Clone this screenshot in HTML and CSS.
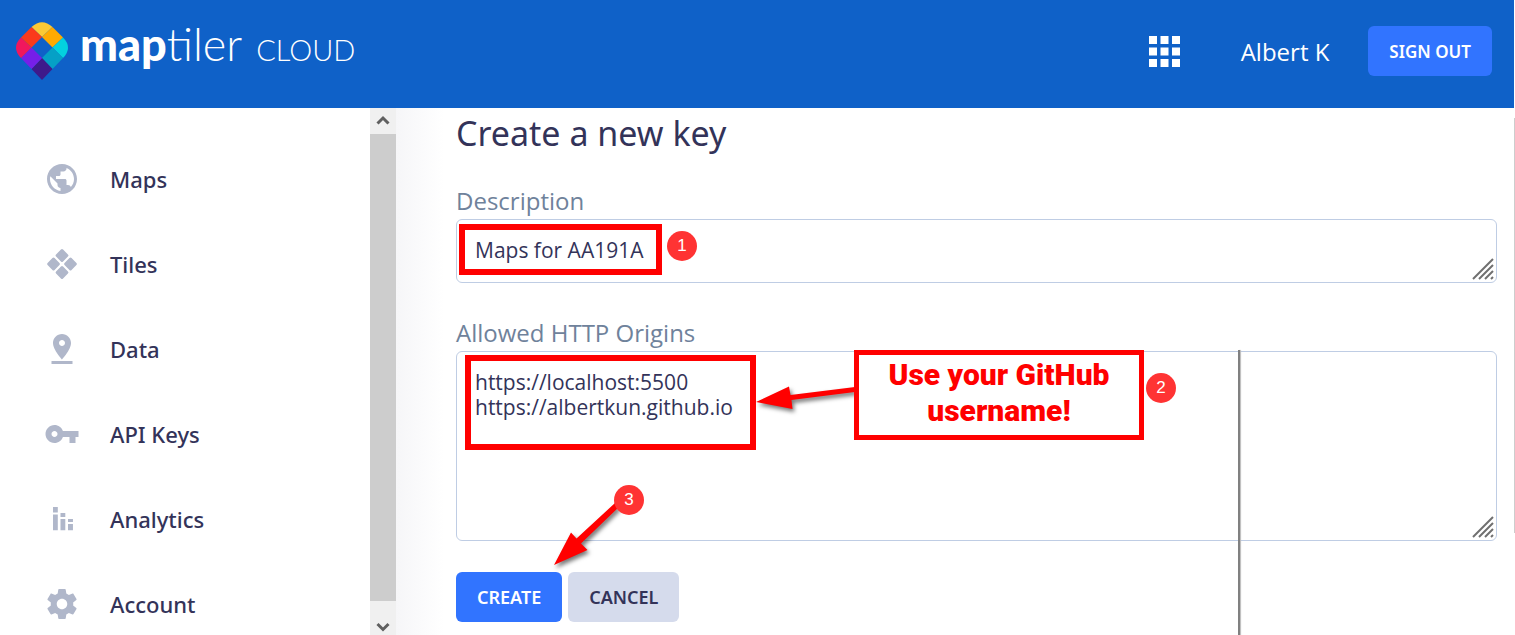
FILE: index.html
```html
<!DOCTYPE html>
<html lang="en">
<head>
<meta charset="utf-8">
<title>MapTiler Cloud - Create a new key</title>
<link rel="stylesheet" href="styles.css">
</head>
<body>
<div class="app">
  <header class="topbar">
    <a class="brand" href="#">
      <svg class="brand-mark" viewBox="0 0 52 58" aria-hidden="true">
        <path fill="#fbc935" d="M15.500 5Q26-4.500 36.500 5L26 15z"/>
        <path fill="#ffaa01" d="M36.500 5L47 15.500 36.500 25.500 26 15z"/>
        <path fill="#03d1df" d="M47 15.500Q57 25.500 47 36L36.500 25.500z"/>
        <path fill="#05a0c6" d="M36.500 25.500L47 36 36.500 47 26 36z"/>
        <path fill="#3e1a8b" d="M26 36L36.500 47 26 58 15.500 47z"/>
        <path fill="#761fe8" d="M15.500 25.500L26 36 15.500 47 5 36z"/>
        <path fill="#f1175d" d="M5 15.500L15.500 25.500 5 36Q-5 25.500 5 15.500z"/>
        <path fill="#fb3a1b" d="M15.500 5L26 15 15.500 25.500 5 15.500z"/>
      </svg>
      <span class="brand-text">
        <span class="brand-name"><b>map</b>tiler</span>
        <span class="brand-product">CLOUD</span>
      </span>
    </a>
    <div class="account-bar">
      <button class="apps" type="button" aria-label="Apps">
        <svg viewBox="0 0 31 31" fill="#fff" aria-hidden="true"><path d="M0 0h8v8H0zM11.500 0h8v8h-8zM23 0h8v8h-8zM0 11.500h8v8H0zM11.500 11.500h8v8h-8zM23 11.500h8v8h-8zM0 23h8v8H0zM11.500 23h8v8h-8zM23 23h8v8h-8z"/></svg>
      </button>
      <a class="user" href="#">Albert K</a>
      <button class="btn btn-primary btn-compact" type="button">SIGN OUT</button>
    </div>
  </header>

  <div class="body">
    <nav class="sidebar">
      <a class="nav-item" href="#">
        <svg viewBox="0 0 24 24"><path d="M12 2C6.480 2 2 6.480 2 12s4.480 10 10 10 10-4.480 10-10S17.520 2 12 2zm-1 17.930c-3.950-.49-7-3.850-7-7.930 0-.62.080-1.210.210-1.790L9 15v1c0 1.100.9 2 2 2v1.930zm6.900-2.540c-.26-.81-1-1.390-1.900-1.390h-1v-3c0-.55-.45-1-1-1H8v-2h2c.55 0 1-.45 1-1V7h2c1.100 0 2-.9 2-2v-.41c2.930 1.190 5 4.060 5 7.410 0 2.080-.8 3.970-2.100 5.390z"/></svg>
        Maps</a>
      <a class="nav-item" href="#">
        <svg viewBox="0 0 24 24"><g transform="rotate(45 12 12)"><rect x="4.700" y="4.700" width="6.600" height="6.600" rx="1"/><rect x="12.700" y="4.700" width="6.600" height="6.600" rx="1"/><rect x="4.700" y="12.700" width="6.600" height="6.600" rx="1"/><rect x="12.700" y="12.700" width="6.600" height="6.600" rx="1"/></g></svg>
        Tiles</a>
      <a class="nav-item" href="#">
        <svg viewBox="0 0 24 24"><path d="M18 8c0-3.310-2.690-6-6-6S6 4.690 6 8c0 4.500 6 11 6 11s6-6.500 6-11zm-8 0c0-1.100.9-2 2-2s2 .9 2 2-.89 2-2 2c-1.100 0-2-.9-2-2zM5 20v2h14v-2H5z"/></svg>
        Data</a>
      <a class="nav-item" href="#">
        <svg viewBox="0 0 24 24"><path fill-rule="evenodd" d="M12.600 10C11.800 7.700 9.600 6 7 6c-3.300 0-6 2.700-6 6s2.700 6 6 6c2.600 0 4.800-1.700 5.600-4H17v4h4v-4h2v-4H12.600zM7 14c-1.100 0-2-.9-2-2s.9-2 2-2 2 .9 2 2-.9 2-2 2z"/></svg>
        API Keys</a>
      <a class="nav-item" href="#">
        <svg viewBox="0 0 24 24"><path d="M6 4h3.200v3.700H6zM6 9h3.200v10.500H6zM11 8h3.200v2.700H11zM11 12h3.200v7.500H11zM16 12h3.300v2H16zM16 15.300h3.300v4.200H16z"/></svg>
        Analytics</a>
      <a class="nav-item" href="#">
        <svg viewBox="0 0 24 24"><path d="M19.430 12.980c.04-.32.070-.64.070-.98s-.03-.66-.07-.98l2.110-1.650c.19-.15.240-.42.120-.64l-2-3.460c-.12-.22-.39-.3-.61-.22l-2.490 1c-.52-.4-1.080-.73-1.690-.98l-.38-2.650C14.460 2.180 14.250 2 14 2h-4c-.25 0-.46.180-.49.420l-.38 2.650c-.61.250-1.170.590-1.690.98l-2.490-1c-.23-.09-.49 0-.61.220l-2 3.460c-.13.220-.07.490.120.640l2.110 1.650c-.04.320-.07.650-.07.980s.03.660.070.980l-2.110 1.650c-.19.150-.24.420-.12.640l2 3.460c.12.220.39.300.61.220l2.490-1c.52.400 1.080.730 1.690.98l.38 2.650c.03.240.240.420.49.420h4c.25 0 .46-.18.49-.42l.38-2.650c.61-.25 1.170-.59 1.690-.98l2.490 1c.23.090.49 0 .61-.22l2-3.460c.12-.22.070-.49-.12-.64l-2.110-1.650zM12 15.500c-1.930 0-3.500-1.570-3.500-3.500s1.570-3.500 3.500-3.500 3.500 1.570 3.500 3.500-1.570 3.500-3.500 3.500z"/></svg>
        Account</a>
    </nav>

    <div class="scrollbar" aria-hidden="true">
      <svg class="scroll-arrow" viewBox="0 0 26 26"><path d="M7.500 15.500L13 10l5.500 5.500"/></svg>
      <div class="scroll-thumb"></div>
      <svg class="scroll-arrow" viewBox="0 0 26 26"><path d="M7.500 15L13 20.500l5.500-5.500"/></svg>
    </div>

    <main class="content">
      <h1>Create a new key</h1>
      <form>
        <label for="description">Description</label>
        <div class="field">
          <textarea id="description" class="short" spellcheck="false">Maps for AA191A</textarea>
          <svg class="grip" viewBox="0 0 24 24"><path d="M2 22L22 2M8 22L22 8M14 22l8-8M20 22l2-2"/></svg>
          <div class="mark mark-description"></div>
          <span class="badge badge-1">1</span>
        </div>

        <label for="origins">Allowed HTTP Origins</label>
        <div class="field">
          <textarea id="origins" class="tall" spellcheck="false">https://localhost:5500
https://albertkun.github.io</textarea>
          <svg class="grip" viewBox="0 0 24 24"><path d="M2 22L22 2M8 22L22 8M14 22l8-8M20 22l2-2"/></svg>
          <div class="mark mark-origins"></div>
          <div class="edge"></div>
          <svg class="arrow arrow-origins" viewBox="0 0 100 30"><path d="M0 17L33 1.500 34.500 10 99 2v5L35.500 15 36.500 24z"/></svg>
          <p class="callout">Use your GitHub username!</p>
          <span class="badge badge-2">2</span>
          <svg class="arrow arrow-create" viewBox="0 0 70 70"><path d="M0 64L17 31.500 22.500 37.500 61 2l4 4L27 42.500 33.500 49z"/></svg>
          <span class="badge badge-3">3</span>
        </div>

        <div class="actions">
          <button class="btn btn-primary" type="button">CREATE</button>
          <button class="btn btn-muted" type="button">CANCEL</button>
        </div>
      </form>
    </main>
    <div class="page-scroll" aria-hidden="true"></div>
  </div>
</div>
</body>
</html>
```

FILE: styles.css
```css
* { box-sizing: border-box; }

body {
  margin: 0;
  background: #fff;
  color: #333359;
  font-family: "Open Sans", "Noto Sans", sans-serif;
}

a { color: inherit; text-decoration: none; }

.app {
  display: flex;
  flex-direction: column;
  height: 100vh;
  overflow: hidden;
}

.topbar {
  display: flex;
  flex: none;
  align-items: center;
  justify-content: space-between;
  height: 108px;
  margin-right: 1px;
  padding: 0 22px 6px 16px;
  background: #0f61c8;
  color: #fff;
}

.brand {
  display: flex;
  align-items: center;
}
.brand-mark { width: 52px; height: 58px; margin-right: 12px; }
.brand-text {
  display: flex;
  align-items: baseline;
  gap: 14px;
  padding-bottom: 8px;
  font-family: Lato, sans-serif;
  font-weight: 300;
  line-height: 48px;
}
.brand-name { font-size: 45px; }
.brand-name b { font-weight: 900; }
.brand-product { font-size: 29px; }

.account-bar { display: flex; align-items: center; }
.apps {
  width: 31px;
  height: 31px;
  padding: 0;
  border: 0;
  background: none;
}
.apps svg { display: block; }
.user { margin: 0 39px 0 61px; font-size: 24px; }

.btn {
  height: 50px;
  padding: 0 21px;
  border: 0;
  border-radius: 6px;
  font-family: "Noto Sans", sans-serif;
  font-size: 18px;
  font-weight: 600;
}
.btn-compact { font-size: 17px; }
.btn-primary { background: #3174ff; color: #fff; }
.btn-muted { background: #d5dbec; color: #333359; }

.body { display: flex; flex: 1; min-height: 0; }

.sidebar {
  flex: none;
  width: 370px;
  padding-top: 28px;
  overflow: hidden;
}
.nav-item {
  display: flex;
  align-items: center;
  gap: 30px;
  height: 85px;
  padding-left: 44px;
  font-family: "Noto Sans", sans-serif;
  font-size: 22px;
  font-weight: 500;
}
.nav-item svg { width: 36px; height: 36px; fill: #b0b7ca; }

.scrollbar {
  display: flex;
  flex: none;
  flex-direction: column;
  width: 26px;
  background: #f0f0f0;
}
.scroll-arrow {
  width: 26px;
  height: 26px;
  fill: none;
  stroke: #606060;
  stroke-width: 3;
}
.scroll-thumb { flex: 1; margin-bottom: 8px; background: #cdcdcd; }

.content {
  flex: 1;
  min-width: 0;
  padding: 4px 17px 0 60px;
  background: linear-gradient(to right, #f6f6f8, #fff 48px);
}

h1 {
  margin: 0 0 34px;
  font-family: "Noto Sans", sans-serif;
  font-size: 34px;
  font-weight: 400;
  line-height: 42px;
}

label {
  display: block;
  padding-bottom: 5px;
  color: #6f829b;
  font-size: 24px;
  line-height: 26px;
}

.field { position: relative; margin-bottom: 37px; }

textarea {
  display: block;
  width: 100%;
  padding: 18px;
  border: 1px solid #bfcde4;
  border-radius: 6px;
  outline: 0;
  background: #fff;
  color: #333359;
  font: 21px/25px "Open Sans", sans-serif;
  resize: none;
}
.short { height: 64px; overflow: hidden; }
.tall { height: 190px; }

.grip {
  position: absolute;
  right: 2px;
  bottom: 2px;
  width: 24px;
  height: 24px;
  fill: none;
  stroke: #707070;
  stroke-width: 2;
}

/* Tutorial annotations drawn over the form */
.mark { position: absolute; border: 6px solid #f00; }
.mark-description { left: 3px; top: 5px; width: 203px; height: 51px; }
.mark-origins { left: 9px; top: 4px; width: 291px; height: 95px; }

.badge {
  position: absolute;
  width: 30px;
  height: 30px;
  border-radius: 50%;
  background: #ff3333;
  color: #fff;
  font: 17px/30px "Liberation Sans", Arial, sans-serif;
  text-align: center;
}
.badge-1 { left: 211px; top: 12px; }
.badge-2 { left: 690px; top: 22px; }
.badge-3 { left: 158px; top: 134px; }

.callout {
  position: absolute;
  left: 398px;
  top: -1px;
  width: 290px;
  height: 90px;
  margin: 0;
  padding: 2px 24px;
  border: 5px solid #f00;
  background: #fff;
  color: #f00;
  font: 900 30px/36px Roboto, sans-serif;
  text-align: center;
}

.arrow {
  position: absolute;
  fill: #f00;
  filter: drop-shadow(2px 3px 2px #00000088);
  overflow: visible;
}
.arrow-origins { left: 300px; top: 34px; width: 100px; height: 30px; }
.arrow-create { left: 98px; top: 150px; width: 70px; height: 70px; }

.edge {
  position: absolute;
  left: 782px;
  top: -1px;
  width: 2px;
  height: 100vh;
  background: #808080;
  box-shadow: 1px 0 1px #bbb;
}

.actions { display: flex; gap: 6px; margin-top: -6px; }

.page-scroll {
  flex: none;
  width: 1px;
  height: 415px;
  margin-top: 10px;
  background: #cdcdcd;
}
```
